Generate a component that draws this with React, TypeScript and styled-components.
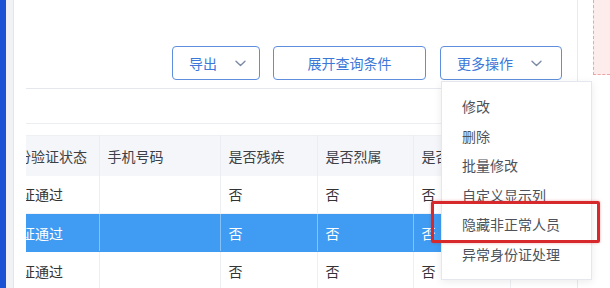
import React from "react";
import styled, { createGlobalStyle } from "styled-components";

const Global = createGlobalStyle`
  html, body { margin: 0; padding: 0; background: #ffffff; }
  body { font-family: "Noto Sans CJK SC", "Noto Sans", sans-serif; }
  * { box-sizing: border-box; }
`;

const Page = styled.div`
  position: relative;
  display: flex;
  width: 610px;
  height: 288px;
  overflow: hidden;
  background: #ffffff;
`;

const LeftRail = styled.div`
  flex: 0 0 6px;
  background: #1a52d4;
`;

const Gutter = styled.div`
  flex: 0 0 8px;
  background: #f0f2f6;
  border-right: 1px solid #e2e5eb;
`;

const Main = styled.div`
  flex: 0 0 564px;
  width: 564px;
  min-width: 0;
  display: flex;
  flex-direction: column;
  padding: 46px 15px 0 12px;
  border-right: 1px solid #e8eaee;
`;

const Toolbar = styled.div`
  display: flex;
  justify-content: flex-end;
  align-items: center;
  gap: 13px;
  height: 34px;
  margin-bottom: 8px;
`;

const ToolButton = styled.button<{ $w: number; $center?: boolean }>`
  width: ${(p) => p.$w}px;
  height: 34px;
  display: flex;
  align-items: center;
  justify-content: ${(p) => (p.$center ? "center" : "flex-start")};
  gap: ${(p) => (p.$center ? 0 : 18)}px;
  padding: 0 0 0 ${(p) => (p.$center ? 0 : 16)}px;
  border: 1px solid #5f8fdc;
  border-radius: 4px;
  background: #ffffff;
  color: #3b78d8;
  font-family: "Noto Sans CJK SC", sans-serif;
  font-size: 14px;
  cursor: pointer;
`;

const MoreWrap = styled.div`
  position: relative;
  margin-left: 1px;
`;

const Menu = styled.ul`
  position: absolute;
  top: 35px;
  left: 1px;
  width: 151px;
  margin: 0;
  padding: 10px 0 9px;
  list-style: none;
  background: #ffffff;
  border: 1px solid #e4e7ed;
  box-shadow: 0 2px 8px rgba(0, 0, 0, 0.08);
  z-index: 5;
`;

const MenuItem = styled.li`
  height: 29.6px;
  line-height: 29.6px;
  padding-left: 20px;
  color: #4e535b;
  font-size: 14px;
  white-space: nowrap;
`;

const Highlight = styled.div`
  position: absolute;
  left: -11px;
  top: 119px;
  width: 169px;
  height: 42px;
  border: 3px solid #d7282b;
  border-radius: 2px;
  box-shadow: 0 0 3px rgba(200, 30, 30, 0.35);
  pointer-events: none;
`;

const Divider = styled.div`
  height: 1px;
  background: #e4e7ed;
`;

const SubBar = styled.div`
  height: 35px;
  border-bottom: 1px solid #eceef2;
  margin-bottom: 11px;
`;

const TableViewport = styled.div`
  overflow: hidden;
  flex: 1;
  min-width: 0;
`;

const Table = styled.table`
  margin-left: -31px;
  border-collapse: collapse;
  table-layout: fixed;
  width: 672px;
  font-size: 14px;
  color: #333333;
`;

const HeadCell = styled.th`
  height: 40px;
  padding: 0 8px;
  text-align: left;
  font-weight: normal;
  color: #3c3f45;
  background: #f5f6f9;
  border-top: 1px solid #eef0f4;
  border-right: 1px solid #ebedf2;
  white-space: nowrap;
  overflow: hidden;
`;

const Row = styled.tr<{ $selected?: boolean }>`
  height: 38px;
  background: ${(p) => (p.$selected ? "#3f9cf2" : "#ffffff")};
  color: ${(p) => (p.$selected ? "#ffffff" : "#333333")};
`;

const Cell = styled.td<{ $selected?: boolean; $indent?: number }>`
  padding: 0 8px 0 ${(p) => 8 + (p.$indent || 0)}px;
  border-right: 1px solid ${(p) => (p.$selected ? "#86c1f7" : "#edeff3")};
  border-bottom: 1px solid ${(p) => (p.$selected ? "#3f9cf2" : "#f2f3f6")};
  white-space: nowrap;
  overflow: hidden;
`;

const RightPane = styled.div`
  flex: 1;
  min-width: 0;
  padding-left: 15px;
`;

const DashedBox = styled.div`
  height: 75px;
  background: #fcecec;
  border-left: 1px dashed #eea5a5;
  border-bottom: 1px dashed #eea5a5;
`;

const Chevron = () => (
  <svg width="11" height="7" viewBox="0 0 11 7" fill="none">
    <path d="M1 1.2 L5.5 5.5 L10 1.2" stroke="#7b8aa6" strokeWidth="1.4" strokeLinecap="round" strokeLinejoin="round" />
  </svg>
);

const headers = ["身份验证状态", "手机号码", "是否残疾", "是否烈属", "是否低保", "备注", "操作"];
const cols = [104, 121, 97, 96, 97, 57, 100];
const rows = [false, true, false];
const menuItems = ["修改", "删除", "批量修改", "自定义显示列", "隐藏非正常人员", "异常身份证处理"];

export default function App() {
  return (
    <>
      <Global />
      <Page>
        <LeftRail />
        <Gutter />
        <Main>
          <Toolbar>
            <ToolButton $w={88}>
              导出
              <Chevron />
            </ToolButton>
            <ToolButton $w={153} $center>
              展开查询条件
            </ToolButton>
            <MoreWrap>
              <ToolButton $w={122}>
                更多操作
                <Chevron />
              </ToolButton>
              <Menu>
                {menuItems.map((m) => (
                  <MenuItem key={m}>{m}</MenuItem>
                ))}
                <Highlight />
              </Menu>
            </MoreWrap>
          </Toolbar>
          <Divider />
          <SubBar />
          <TableViewport>
            <Table>
              <colgroup>
                {cols.map((w, i) => (
                  <col key={i} style={{ width: w }} />
                ))}
              </colgroup>
              <thead>
                <tr>
                  {headers.map((h) => (
                    <HeadCell key={h}>{h}</HeadCell>
                  ))}
                </tr>
              </thead>
              <tbody>
                {rows.map((sel, i) => (
                  <Row key={i} $selected={sel}>
                    <Cell $selected={sel} $indent={4}>验证通过</Cell>
                    <Cell $selected={sel}></Cell>
                    <Cell $selected={sel}>否</Cell>
                    <Cell $selected={sel}>否</Cell>
                    <Cell $selected={sel}>否</Cell>
                    <Cell $selected={sel}></Cell>
                    <Cell $selected={sel}></Cell>
                  </Row>
                ))}
              </tbody>
            </Table>
          </TableViewport>
        </Main>
        <RightPane>
          <DashedBox />
        </RightPane>
      </Page>
    </>
  );
}
